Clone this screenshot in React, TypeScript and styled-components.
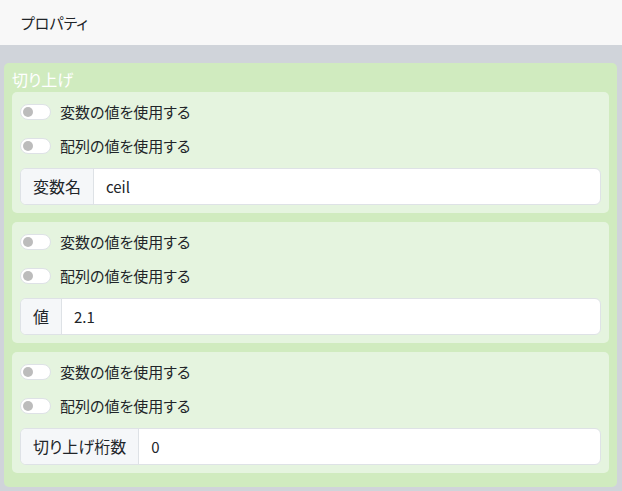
import React from "react";
import styled, { createGlobalStyle } from "styled-components";

const Global = createGlobalStyle`
  html, body { margin: 0; padding: 0; }
  body {
    background: #d0d4da;
    font-family: "Noto Sans CJK JP", "Noto Sans", sans-serif;
    font-feature-settings: "palt";
    color: #212529;
    font-size: 16px;
  }
  * { box-sizing: border-box; }
`;

const Page = styled.div`
  width: 622px;
  height: 491px;
  background: #d0d4da;
  display: flex;
  flex-direction: column;
`;

const Header = styled.div`
  height: 45px;
  background: #f8f8f8;
  display: flex;
  align-items: center;
  padding-left: 21px;
  font-size: 15px;
  color: #212529;
  flex-shrink: 0;
`;

const Body = styled.div`
  padding: 18px 5px 0 4px;
`;

const Outer = styled.div`
  background: #d0ebbf;
  border-radius: 5px;
  padding: 4px 8px 14px 8px;
  display: flex;
  flex-direction: column;
`;

const Title = styled.div`
  color: #ffffff;
  font-size: 16px;
  line-height: 24px;
  height: 24.7px;
`;

const Cards = styled.div`
  display: flex;
  flex-direction: column;
  gap: 9px;
`;

const Card = styled.div`
  background: #e5f4df;
  border-radius: 5px;
  padding: 8px;
  display: flex;
  flex-direction: column;
  gap: 10px;
`;

const SwitchRow = styled.label`
  display: flex;
  align-items: center;
  height: 24px;
  font-size: 15px;
  line-height: 24px;
  color: #212529;
`;

const Switch = styled.span`
  width: 31px;
  height: 16px;
  border: 1px solid #dee2e6;
  border-radius: 8px;
  background: #ffffff;
  display: flex;
  align-items: center;
  padding-left: 2px;
  margin-right: 9px;
  flex-shrink: 0;
`;

const Knob = styled.span`
  width: 10px;
  height: 10px;
  border-radius: 50%;
  background: #bcbcbc;
`;

const Group = styled.div`
  display: flex;
  height: 37px;
  border: 1px solid #dee2e6;
  border-radius: 6px;
  background: #ffffff;
  overflow: hidden;
`;

const GroupLabel = styled.span`
  display: flex;
  align-items: center;
  padding: 0 12px;
  background: #f5f7f9;
  border-right: 1px solid #dee2e6;
  font-size: 16px;
  white-space: nowrap;
`;

const GroupInput = styled.span`
  display: flex;
  align-items: center;
  padding: 0 12px;
  font-size: 15px;
  flex: 1;
`;

function Toggle({ text }: { text: string }) {
  return (
    <SwitchRow>
      <Switch>
        <Knob />
      </Switch>
      {text}
    </SwitchRow>
  );
}

function Section({ label, value }: { label: string; value: string }) {
  return (
    <Card>
      <Toggle text="変数の値を使用する" />
      <Toggle text="配列の値を使用する" />
      <Group>
        <GroupLabel>{label}</GroupLabel>
        <GroupInput>{value}</GroupInput>
      </Group>
    </Card>
  );
}

export default function App() {
  return (
    <Page>
      <Global />
      <Header>プロパティ</Header>
      <Body>
        <Outer>
          <Title>切り上げ</Title>
          <Cards>
            <Section label="変数名" value="ceil" />
            <Section label="値" value="2.1" />
            <Section label="切り上げ桁数" value="0" />
          </Cards>
        </Outer>
      </Body>
    </Page>
  );
}
